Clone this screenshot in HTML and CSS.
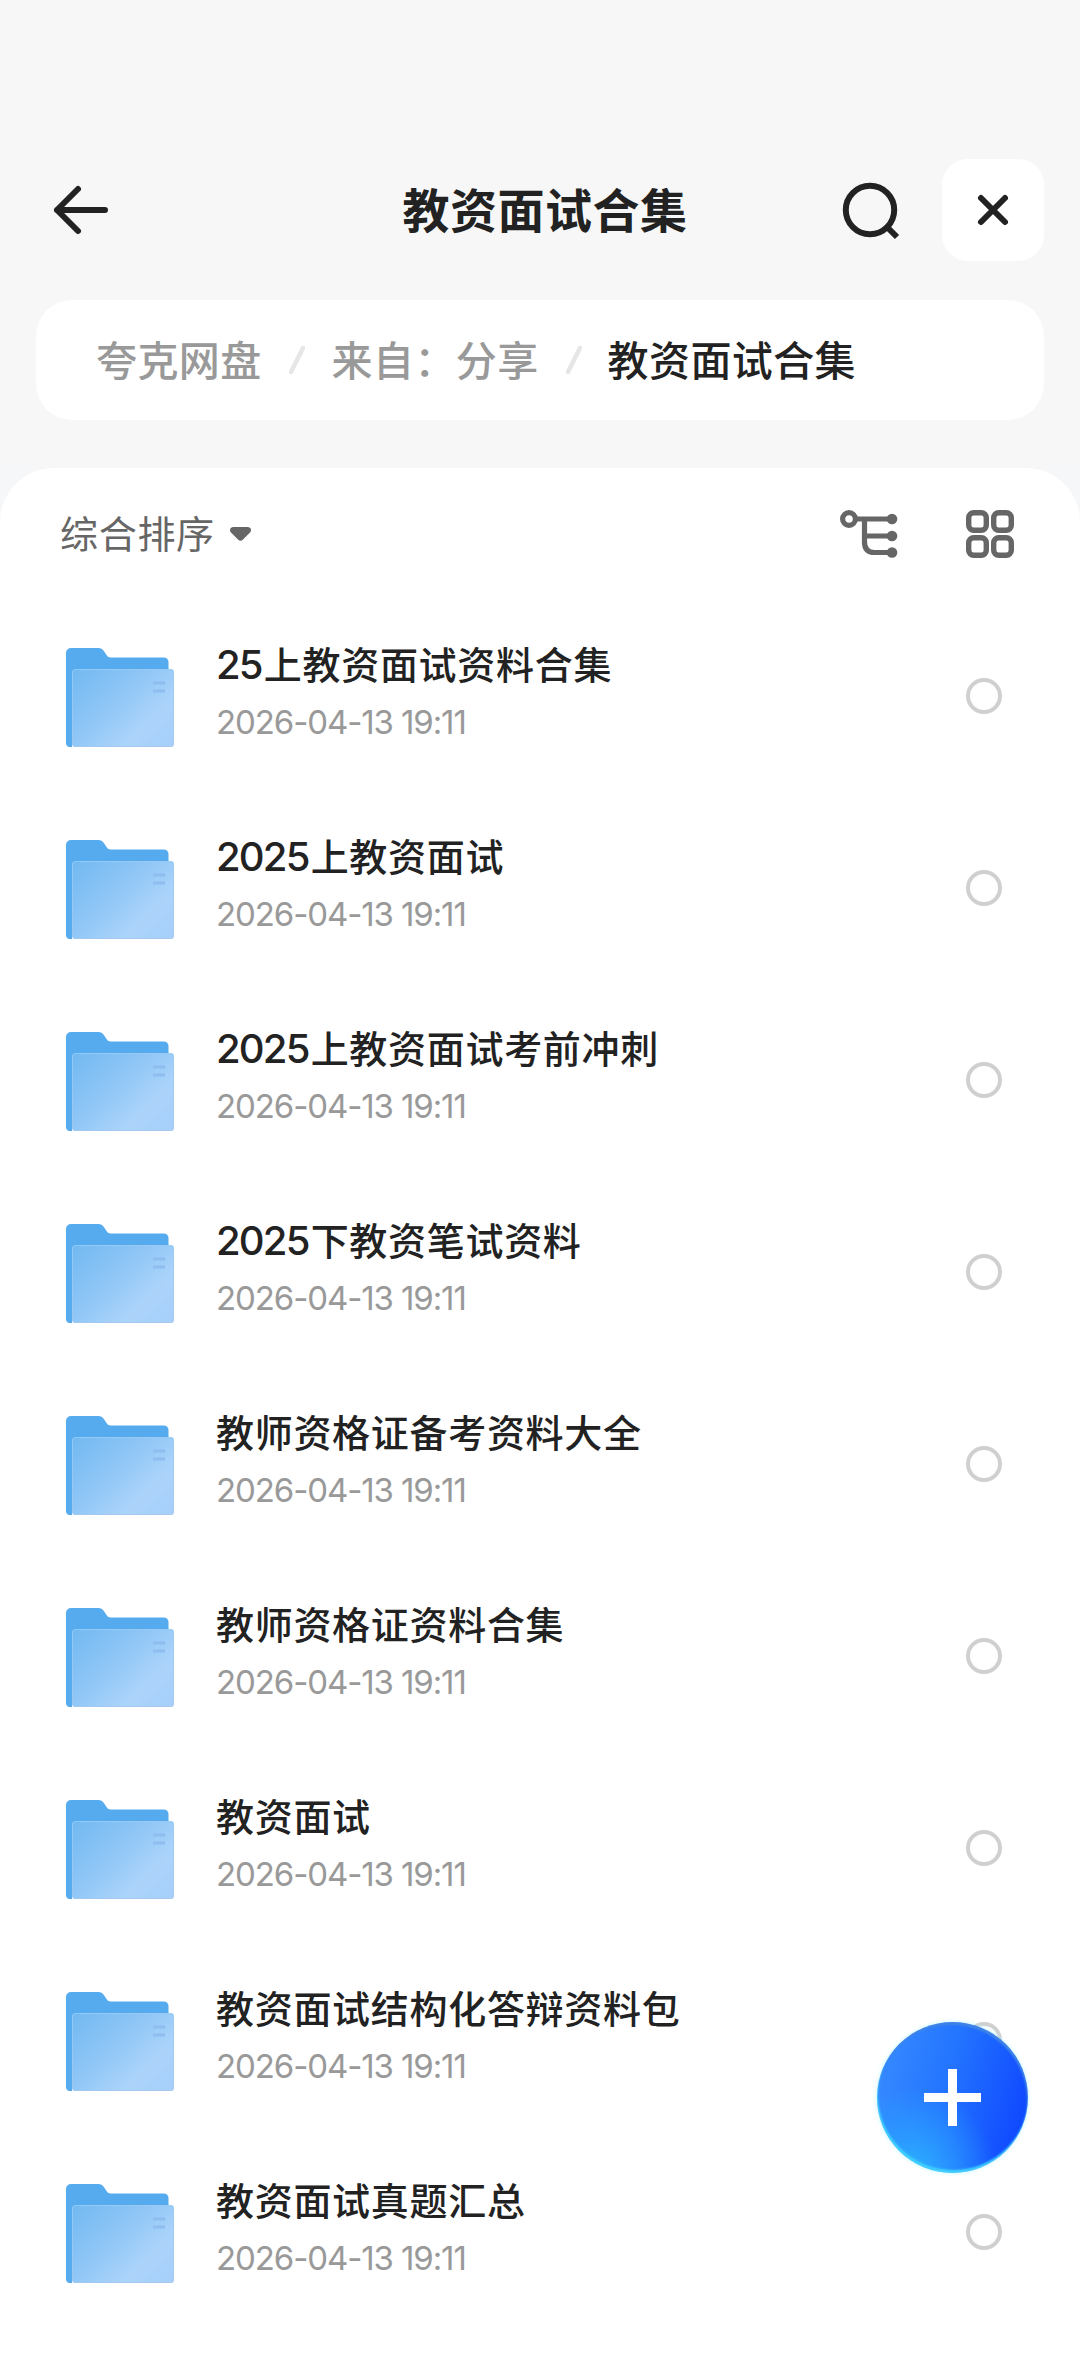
FILE: index.html
```html
<!DOCTYPE html>
<html lang="zh-CN">
<head>
<meta charset="utf-8">
<title>教资面试合集</title>
<link rel="stylesheet" href="styles.css">
</head>
<body>
<svg class="defs" aria-hidden="true">
  <defs>
    <linearGradient id="front" x1="0" y1="0" x2="1" y2="0.8">
      <stop offset="0" stop-color="#71b9f1"/>
      <stop offset="0.45" stop-color="#8fc6f6"/>
      <stop offset="0.8" stop-color="#acd4fb"/>
      <stop offset="1" stop-color="#a6cffa"/>
    </linearGradient>
    <linearGradient id="edge" x1="0" y1="0" x2="1" y2="1">
      <stop offset="0" stop-color="#8fcaf6"/>
      <stop offset="1" stop-color="#a9c8ee"/>
    </linearGradient>
    <symbol id="folder" viewBox="0 0 108 99">
      <path d="M0 5a5 5 0 0 1 5-5h28q3 0 4.500 2.500l3 4.500q1.500 2.500 4 2.500H98a4.500 4.500 0 0 1 4.500 4.500V95H6v4H4a4 4 0 0 1-4-4z" fill="#55abed"/>
      <rect x="6" y="21" width="102" height="78" rx="3.500" fill="url(#front)"/>
      <rect x="6.500" y="21.500" width="101" height="77" rx="3" fill="none" stroke="url(#edge)"/>
      <path d="M87 35h12M87 43h12" stroke="#8fbdf0" stroke-width="3"/>
    </symbol>
  </defs>
</svg>
<header class="header">
  <div class="navbar">
    <svg class="back" width="60" height="60" viewBox="0 0 60 60"><path d="M27 9L6 30l21 21M6 30h48" /></svg>
    <h1 class="title">教资面试合集</h1>
    <div class="actions">
      <svg class="search" width="60" height="60" viewBox="0 0 60 60"><circle cx="30" cy="30" r="24.200"/><path d="M46.500 46.500l10.500 10.500"/></svg>
      <button class="close" aria-label="关闭"><svg width="36" height="36" viewBox="0 0 36 36"><path d="M6 6l24 24M30 6L6 30"/></svg></button>
    </div>
  </div>
  <nav class="crumbs">
    <span>夸克网盘</span>
    <svg class="slash" width="16" height="28" viewBox="0 0 16 28"><path d="M14 2L2 26"/></svg>
    <span>来自：分享</span>
    <svg class="slash" width="16" height="28" viewBox="0 0 16 28"><path d="M14 2L2 26"/></svg>
    <span class="current">教资面试合集</span>
  </nav>
</header>
<main class="sheet-wrap">
  <div class="sheet">
    <div class="toolbar">
      <div class="sort"><span>综合排序</span><svg width="21" height="14" viewBox="0 0 21 14"><path d="M3 0h15q3 .5 3 3 0 1.500-1 2.500l-7 7q-2.500 2.500-5 0l-7-7q-1-1-1-2.500 0-2.500 3-3z"/></svg></div>
      <div class="views">
        <svg width="58" height="48" viewBox="0 0 58 48"><g fill="none" stroke="#666" stroke-width="5.200"><circle cx="9" cy="9" r="6.400"/><path d="M17 9h35M24.500 9v23q0 10.500 10 10.500H52M24.500 26H52"/></g><g fill="#666"><circle cx="52" cy="9" r="5.300"/><circle cx="52" cy="26" r="5.300"/><circle cx="52" cy="42.500" r="5.300"/></g></svg>
        <svg width="48" height="48" viewBox="0 0 48 48"><g fill="none" stroke="#666" stroke-width="5.400"><rect x="2.700" y="2.700" width="17.600" height="17.600" rx="5"/><rect x="27.700" y="2.700" width="17.600" height="17.600" rx="5"/><rect x="2.700" y="27.700" width="17.600" height="17.600" rx="5"/><rect x="27.700" y="27.700" width="17.600" height="17.600" rx="5"/></g></svg>
      </div>
    </div>
    <ul class="files">
      <li class="file"><svg class="folder"><use href="#folder"/></svg><div class="info"><p class="name"><span class="num">25</span>上教资面试资料合集</p><time class="date">2026-04-13 19:11</time></div><i class="radio"></i></li>
      <li class="file"><svg class="folder"><use href="#folder"/></svg><div class="info"><p class="name"><span class="num">2025</span>上教资面试</p><time class="date">2026-04-13 19:11</time></div><i class="radio"></i></li>
      <li class="file"><svg class="folder"><use href="#folder"/></svg><div class="info"><p class="name"><span class="num">2025</span>上教资面试考前冲刺</p><time class="date">2026-04-13 19:11</time></div><i class="radio"></i></li>
      <li class="file"><svg class="folder"><use href="#folder"/></svg><div class="info"><p class="name"><span class="num">2025</span>下教资笔试资料</p><time class="date">2026-04-13 19:11</time></div><i class="radio"></i></li>
      <li class="file"><svg class="folder"><use href="#folder"/></svg><div class="info"><p class="name">教师资格证备考资料大全</p><time class="date">2026-04-13 19:11</time></div><i class="radio"></i></li>
      <li class="file"><svg class="folder"><use href="#folder"/></svg><div class="info"><p class="name">教师资格证资料合集</p><time class="date">2026-04-13 19:11</time></div><i class="radio"></i></li>
      <li class="file"><svg class="folder"><use href="#folder"/></svg><div class="info"><p class="name">教资面试</p><time class="date">2026-04-13 19:11</time></div><i class="radio"></i></li>
      <li class="file"><svg class="folder"><use href="#folder"/></svg><div class="info"><p class="name">教资面试结构化答辩资料包</p><time class="date">2026-04-13 19:11</time></div><i class="radio"></i></li>
      <li class="file"><svg class="folder"><use href="#folder"/></svg><div class="info"><p class="name">教资面试真题汇总</p><time class="date">2026-04-13 19:11</time></div><i class="radio"></i></li>
    </ul>
  </div>
</main>
<button class="fab" aria-label="添加"><svg width="57" height="57" viewBox="0 0 57 57"><path d="M28.500 0v57M0 28.500h57" stroke="#fff" stroke-width="9"/></svg></button>
</body>
</html>
```

FILE: styles.css
```css
* { box-sizing: border-box; margin: 0; padding: 0; }
body {
  position: relative;
  width: 1080px;
  height: 2373px;
  overflow: hidden;
  background: #fff;
  color: #222;
  font-family: "Noto Sans CJK SC", sans-serif;
}
button { border: 0; display: grid; place-items: center; }
svg { display: block; flex: none; }
.defs { position: absolute; width: 0; height: 0; }

.header { height: 468px; padding: 159px 36px 0; background: #f7f7f7; }
.navbar {
  display: grid;
  grid-template-columns: 1fr auto 1fr;
  align-items: center;
  height: 102px;
  padding-left: 15px;
}
.back, .search, .close svg { fill: none; stroke: #222; stroke-width: 6; stroke-linecap: round; stroke-linejoin: round; }
.search { stroke-linecap: butt; }
.title { padding: 0 5px 5px 0; font-size: 47px; line-height: 60px; font-weight: 700; letter-spacing: .5px; }
.actions { display: flex; justify-content: flex-end; align-items: center; gap: 42px; }
.close { width: 102px; height: 102px; border-radius: 26px; background: #fff; }

.crumbs {
  display: flex;
  align-items: center;
  height: 120px;
  margin-top: 39px;
  padding-left: 60px;
  border-radius: 36px;
  background: #fff;
  color: #999;
  font-size: 41px;
  font-weight: 500;
  letter-spacing: .4px;
  white-space: nowrap;
}
.crumbs span { padding-bottom: 5px; }
.slash { margin: 0 27px; fill: none; stroke: #e6e6e6; stroke-width: 4.500; stroke-linecap: round; }
.crumbs .current { margin-left: -1px; color: #222; }

.sheet-wrap { background: #f5f7f9; }
.sheet { height: 1905px; border-radius: 54px 54px 0 0; background: #fff; }
.toolbar {
  display: flex;
  justify-content: space-between;
  align-items: center;
  height: 132px;
  padding: 0 66px 0 60px;
}
.sort { display: flex; align-items: center; gap: 15px; color: #666; font-size: 38px; letter-spacing: .7px; }
.sort span { padding-bottom: 5px; }
.sort svg { fill: #666; }
.views { display: flex; align-items: center; gap: 68px; }

.files { list-style: none; }
.file { display: flex; align-items: center; height: 192px; padding: 0 78px 0 66px; }
.folder { width: 108px; height: 99px; margin-top: 3px; }
.info { flex: 1; margin-left: 42px; padding-bottom: 15px; }
.name { height: 50px; line-height: 50px; font-size: 38px; font-weight: 500; letter-spacing: .7px; white-space: nowrap; }
.num { font-family: Inter, sans-serif; font-size: 40px; letter-spacing: -1.800px; margin-right: 2px; }
.date { display: block; height: 34px; margin-top: 17px; line-height: 34px; color: #999; font-family: Inter, sans-serif; font-size: 33px; letter-spacing: -1.100px; }
.radio { width: 36px; height: 36px; border: 4px solid #d0d0d0; border-radius: 50%; }

.fab {
  position: absolute;
  left: 877px;
  top: 2022px;
  width: 151px;
  height: 151px;
  border-radius: 50%;
  background:
    radial-gradient(circle at 22% 100%, #2bb2ff 0, rgba(43, 160, 255, .8) 18%, rgba(43, 140, 255, 0) 45%),
    linear-gradient(105deg, #3a8dff 0%, #2374ff 45%, #1049ff 90%);
  box-shadow: inset 1px -3px 2px #3fd0ff, inset -1px 3px 2px #3f84e6, 0 0 4px rgba(170, 245, 255, .8);
}
```
